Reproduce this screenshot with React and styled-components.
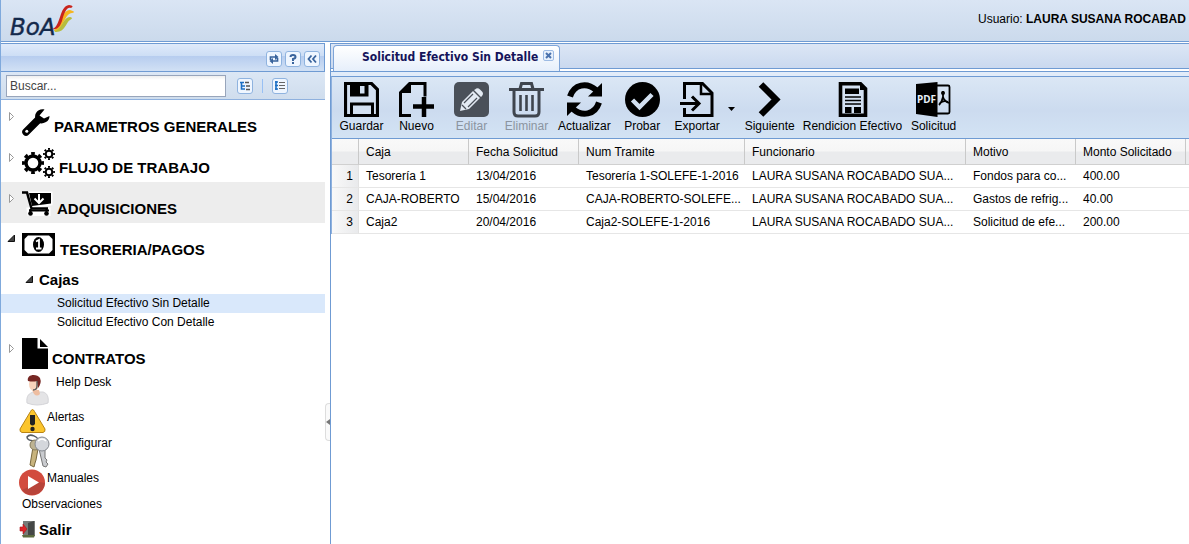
import React from "react";
import styled, { createGlobalStyle, css } from "styled-components";

const GlobalStyle = createGlobalStyle`
  * { box-sizing: border-box; }
  html, body, #root { height: 100%; }
  body {
    margin: 0;
    background: #fff;
    color: #000;
    font: 12px/18px "Liberation Sans", Arial, sans-serif;
    overflow: hidden;
  }
  button, input { font: inherit; color: inherit; }
  svg { display: block; flex: none; }
`;

const Page = styled.div`
  display: flex;
  flex-direction: column;
  min-height: 100vh;
  border-left: 1px solid #7fa9dc;
`;

const Banner = styled.header`
  display: flex;
  justify-content: space-between;
  height: 42px;
  overflow: hidden;
  background: linear-gradient(#dae5f4, #cbdaec);
  border-bottom: 1px solid #6f9bd3;
`;

const User = styled.div`
  flex: 0 0 211px;
  padding-top: 10px;
  white-space: nowrap;
`;

const Body = styled.div`
  display: flex;
  flex: 1;
  margin-top: 1px;
`;

const Sidebar = styled.aside`
  flex: 0 0 324px;
  display: flex;
  flex-direction: column;
`;

const PanelHead = styled.div`
  display: flex;
  align-items: center;
  justify-content: flex-end;
  gap: 3px;
  height: 29px;
  padding: 2px 4px 0 0;
  border: solid #6f9bd3;
  border-width: 1px 1px 1px 0;
  background: linear-gradient(#dfeafa, #cddef5 44%, #b7cdef 46%, #cfdff4 95%);
`;

const ToolButton = styled.button`
  width: 16px;
  height: 16px;
  padding: 0;
  border: 1px solid #8fb3df;
  border-radius: 3px;
  background: #eff6ff;
  color: #39639c;
  display: grid;
  place-items: center;
`;

const SearchBar = styled.div`
  display: flex;
  align-items: center;
  height: 28px;
  padding-left: 5px;
  gap: 9px;
  background: linear-gradient(#dce7f5, #cfdded);
  border-bottom: 1px solid #8fb1de;
`;

const Search = styled.input`
  width: 220px;
  height: 22px;
  margin-right: 2px;
  padding: 0 3px;
  border: 1px solid #98a5bb;
  background: linear-gradient(#eee, #fff 4px);
  color: #444;
  &::placeholder { color: #444; opacity: 1; }
`;

const Separator = styled.span`
  width: 1px;
  height: 14px;
  background: #98c0f4;
`;

const Tree = styled.ul`
  list-style: none;
  margin: 0;
  padding: 0;
`;

const kinds = {
  module: css`height: 41px; padding-left: 5px;`,
  folder: css`height: 30px; padding-left: 23px;`,
  leaf: css`height: 19px; padding-left: 56px;`,
  tool: css`height: 35px; padding-left: 20px;`,
  compact: css`height: 26px; padding-left: 18px;`,
  plain: css`height: 19px; padding-left: 21px;`,
  exit: css`height: 30px; padding-left: 18px;`,
};

const Row = styled.li`
  display: flex;
  align-items: flex-start;
  ${(p) => kinds[p.$kind]}
  background: ${(p) => p.$bg || "transparent"};
`;

const Toggle = styled.button`
  flex: none;
  width: ${(p) => (p.$small ? 15 : 16)}px;
  height: 12px;
  margin-top: 10px;
  padding: 0;
  border: 0;
  background: none;
`;

const ModuleIcon = styled.span`
  align-self: center;
  width: ${(p) => p.$w}px;
  padding-top: 2px;
  margin-right: 4px;
`;

const Heading = styled.a`
  color: inherit;
  text-decoration: none;
  font-size: 15px;
  font-weight: bold;
  line-height: 18px;
  margin-top: ${(p) => (p.$deep ? 18 : 7)}px;
  white-space: nowrap;
`;

const Item = styled.a`
  color: inherit;
  text-decoration: none;
  white-space: nowrap;
`;

const ItemIcon = styled.span`
  width: ${(p) => p.$w}px;
  margin-top: ${(p) => p.$top || 0}px;
  margin-right: ${(p) => p.$gap || 0}px;
`;

const Splitter = styled.div`
  flex: 0 0 5px;
  padding-top: 360px;
`;

const Collapse = styled.button`
  width: 5px;
  height: 38px;
  padding: 0;
  border: 1px solid #ddd;
  border-right: 0;
  border-radius: 4px 0 0 4px;
  background: #fafafa;
  display: grid;
  place-items: center;
`;

const Main = styled.main`
  flex: 1;
  min-width: 0;
  border-left: 1px solid #6f9bd3;
  border-top: 1px solid #6f9bd3;
`;

const TabStrip = styled.div`
  height: 28px;
  padding: 1px 0 0 2px;
  background: linear-gradient(#dce6f5, #cad9ef 24px, #6f9bd3 24px, #6f9bd3 25px, #fff 25px, #fff 27px, #6f9bd3 27px);
`;

const Tab = styled.div`
  display: flex;
  align-items: flex-start;
  gap: 5px;
  width: 227px;
  height: 26px;
  padding: 2px 0 0 28px;
  border: 1px solid #7fa5d8;
  border-bottom: 0;
  border-radius: 4px 4px 0 0;
  background: linear-gradient(#fff, #e6effb);
  color: #15145a;
  font: bold 12px/18px "DejaVu Sans Condensed", Tahoma, sans-serif;
  white-space: nowrap;
`;

const CloseTab = styled.button`
  flex: none;
  width: 11px;
  height: 11px;
  margin-top: 2px;
  padding: 0;
  border: 1px solid #9dbbe4;
  border-radius: 2px;
  background: #e8f1fc;
  color: #4a72ad;
`;

const TabBody = styled.div`
  padding-top: 4px;
  background: linear-gradient(#e2ecf9, #e2ecf9) top / 100% 4px no-repeat;
`;

const Content = styled.section`
  border-left: 1px solid #8fb1de;
  border-top: 1px solid #6f9bd3;
`;

const Toolbar = styled.div`
  display: flex;
  align-items: flex-start;
  gap: 8px;
  height: 62px;
  padding: 5px 6px 0;
  background: linear-gradient(#dbe7f5, #ccdbef 55%, #d3e3f4);
  border-bottom: 1px solid #6f9bd3;
`;

const Action = styled.button`
  display: flex;
  flex: none;
  flex-direction: column;
  align-items: center;
  min-width: 47px;
  padding: 0;
  border: 0;
  background: none;
  line-height: 17px;
  white-space: nowrap;
  &:disabled { color: #8b94a0; }
`;

const MenuAction = styled.div`
  display: flex;
  align-items: center;
  gap: 7px;
  margin-right: 2px;
`;

const MenuArrow = styled.button`
  width: 7px;
  height: 4px;
  padding: 0;
  border: 0;
  background: none;
`;

const Grid = styled.table`
  width: 100%;
  table-layout: fixed;
  border-collapse: separate;
  border-spacing: 0;
`;

const Col = styled.col`
  width: ${(p) => (p.$w ? `${p.$w}px` : "auto")};
`;

const Th = styled.th`
  height: 26px;
  padding: 0 7px;
  text-align: left;
  font-weight: normal;
  white-space: nowrap;
  background: linear-gradient(#f9f9f9, #f6f6f6 48%, #eaebed 52%, #eaebed);
  border-right: 1px solid #c9c9c9;
  border-bottom: 1px solid #d0d0d0;
  &:last-child { border-right: 0; }
`;

const Td = styled.td`
  height: 23px;
  padding: 0 0 0 7px;
  white-space: nowrap;
  border-bottom: 1px solid #e6e6e6;
`;

const RowNumber = styled(Td)`
  padding: 0 5px 0 0;
  text-align: right;
  background: linear-gradient(90deg, #f9f9f9, #e9eaec);
  border-right: 1px solid #e2e2e2;
`;

/* ---------- drawings ---------- */

const Logo = () => (
  <svg width="90" height="41" viewBox="0 0 90 41" role="img" aria-label="BoA">
    <text x="9" y="35" fontFamily="DejaVu Sans, Verdana, sans-serif" fontStyle="italic" fontSize="23" fill="#13294b" stroke="#13294b" strokeWidth=".4">BoA</text>
    <path d="M53 30C61 30 61 18 69 17Q73 18 69 20C65 22 64 33 54 32Z" fill="#b5bd3e" />
    <path d="M53 30C61 27 59 11 69 10Q76 12 71 13C64 13 62 29 54 31Z" fill="#f6b51f" />
    <path d="M51 29C60 27 58 6 68 5Q74 6 70 8C66 6 63 13 61 21C59 27 56 30 51 29Z" fill="#c9241c" />
  </svg>
);

const Closed = () => (
  <svg width="16" height="12"><path d="M3.500 2.500v8l4-4z" fill="#fff" stroke="#999" /></svg>
);
const Opened = () => (
  <svg width="16" height="12"><path d="M8.500 2v6.500H2z" fill="#444" stroke="#111" /></svg>
);

const Wrench = () => (
  <svg width="28" height="28" viewBox="0 0 28 28">
    <path d="M4 24L16 12" stroke="#000" strokeWidth="7.500" strokeLinecap="round" />
    <path d="M22.500 1.500C16 0 11 6 14 12.500q4 5 10 1.500 3.500-2 3.500-6L22 10.500l-4.500-3z" />
    <circle cx="4.800" cy="23.300" r="1.500" fill="#fff" />
  </svg>
);

const Gear = ({ x, y, ring, teeth, w }) => (
  <g fill="none" stroke="#000">
    <circle cx={x} cy={y} r={ring} strokeWidth={w} />
    <circle cx={x} cy={y} r={teeth} strokeWidth={w} pathLength="16" strokeDasharray="1 1" strokeDashoffset=".5" />
  </g>
);

const Gears = () => (
  <svg width="33" height="30" viewBox="0 0 33 30">
    <Gear x={11} y={15} ring={7} teeth={9.3} w={3.4} />
    <Gear x={27} y={6} ring={3.3} teeth={5} w={2} />
    <Gear x={27} y={24} ring={3.3} teeth={5} w={2} />
  </svg>
);

const Cart = () => (
  <svg width="31" height="25" viewBox="0 0 31 25">
    <g stroke="#fff" strokeWidth="3" fill="#fff"><path d="M7 2h22v11L9 16z" /><path d="M6 18h21v6H7z" /></g>
    <path d="M0 1.500h5l4.500 16H26" fill="none" stroke="#000" strokeWidth="2.500" />
    <path d="M7 2h22v10.500L10 15z" />
    <path d="M7 19.500h20M8.500 18v6M24.500 18v6" stroke="#000" strokeWidth="2" />
    <circle cx="8.500" cy="22.500" r="2.300" /><circle cx="24.500" cy="22.500" r="2.300" />
    <path d="M17 3v9M12.500 7.500l4.500 4.500 4.500-4.500" fill="none" stroke="#fff" strokeWidth="2" />
  </svg>
);

const Money = () => (
  <svg width="33" height="23" viewBox="0 0 33 23">
    <rect width="33" height="23" />
    <path d="M6 2.500h21l3.500 3.500v11L27 20.500H6L2.500 17V6z" fill="#fff" />
    <ellipse cx="16.500" cy="11.500" rx="5.500" ry="7.500" />
    <path d="M14 8.500l3-1.500v8M14 15.500h5.500" fill="none" stroke="#fff" strokeWidth="1.800" />
  </svg>
);

const Sheet = () => (
  <svg width="26" height="31" viewBox="0 0 26 31">
    <path d="M0 0h15.500v10.500H26V31H0zM18 1l8 8h-8z" />
  </svg>
);

const Agent = () => (
  <svg width="32" height="35" viewBox="0 0 32 35">
    <path d="M6 30C5 23 8 20 13 19l9 0c4 1 6 5 5 11q-11 4-21 0" fill="#e4e4e6" stroke="#d4d4d8" />
    <path d="M11 17h7l1 4q-3 3-6 0z" fill="#eebda0" />
    <ellipse cx="13" cy="11" rx="5" ry="7" fill="#f8d3bb" />
    <path d="M7 8C5 1 16 0 19 5q2 5-2 10l-1-7q-4 1-9 0" fill="#762723" />
    <path d="M16 8v5q0 4-4 4" fill="none" stroke="#555" strokeWidth="1.300" />
  </svg>
);

const Warning = () => (
  <svg width="27" height="26" viewBox="0 0 27 26">
    <path d="M13.500 1.500q1 0 2 2L26 21q.5 3-2 3.500H3Q.5 24 1 21L11.500 3.500q1-2 2-2" fill="#fbc52d" stroke="#b98414" />
    <path d="M11 7h5v9q-2.500 3-5 0z" fill="#222" /><circle cx="13.500" cy="21" r="2.200" fill="#222" />
  </svg>
);

const Keys = () => (
  <svg width="32" height="35" viewBox="0 0 32 35">
    <path d="M19 9C17 2 9-1 6 3q0 4 9 4" fill="none" stroke="#555b63" strokeWidth="1.500" />
    <path d="M12 13L9 31l4 2 1-4 1-3 2-11z" fill="#c8b47e" stroke="#78683f" />
    <path d="M18 15l4 17 3 1 2-3-2-2 1-2-2-2 0-9z" fill="#c9cbcf" stroke="#777" />
    <circle cx="14" cy="11" r="5" fill="#bdb392" stroke="#857b5c" />
    <circle cx="21" cy="10" r="7" fill="#d4d7dc" stroke="#84888f" />
    <path d="M17 7q4-4 8 0" fill="none" stroke="#fff" strokeWidth="1.500" />
  </svg>
);

const Play = () => (
  <svg width="27" height="27" viewBox="0 0 27 27">
    <circle cx="13" cy="13.500" r="13" fill="#d24b3e" />
    <path d="M3 21A13 13 0 0 0 26 14L20 13z" fill="#b8443a" />
    <path d="M9 7l11 6.500L9 20z" fill="#fff" />
  </svg>
);

const Door = () => (
  <svg width="18" height="18" viewBox="0 0 18 18">
    <path d="M4 1h12v15H4z" fill="#777a77" /><path d="M9 3l6-2v15l-6 1z" fill="#454746" />
    <path d="M3 15h13l-1 2.500H4z" fill="#5c6b3f" />
    <path d="M1 7h3V4l4 5-4 5v-3H1z" fill="#de2428" stroke="#a8151b" strokeWidth=".6" />
  </svg>
);

const ExpandAll = () => (
  <svg width="14" height="14"><path d="M2 3.500h4M3.500 3v7H7M3.500 7H7" fill="none" stroke="#1c6fc4" strokeWidth="1.600" /><path d="M7 3.500h4M8 7h4M8 10.500h4" stroke="#555" strokeWidth="1.500" /></svg>
);
const CollapseAll = () => (
  <svg width="14" height="14"><path d="M2 3h3M2 6.500h3M2 10h3M3 2v9" stroke="#1c6fc4" strokeWidth="1.600" /><path d="M6 3.500h6M6 6.500h6M6 9.500h6" stroke="#666" /></svg>
);

const Big = ({ children }) => (
  <svg width="35" height="36" viewBox="0 0 35 36">{children}</svg>
);

const pale = "#d3e0f1";

const icons = {
  save: (
    <Big>
      <path d="M1.500 1.500h26l6 6v26h-32z" fill={pale} stroke="#000" strokeWidth="3.200" />
      <path d="M6 1h18.500v13.500H6z" /><path d="M16 4h4.500v7.500H16z" fill={pale} />
      <path d="M7.500 34V22h21v12" fill="none" stroke="#000" strokeWidth="3" />
    </Big>
  ),
  add: (
    <Big>
      <path d="M11 1.500h15v13M1.500 10v23.500H12" fill="none" stroke="#000" strokeWidth="3" />
      <path d="M10 0h2v11H0v-1z" /><path d="M14 24.500h21M25 15v20" stroke="#000" strokeWidth="4.500" />
    </Big>
  ),
  edit: (
    <Big>
      <rect width="35" height="35" rx="5" fill="#4a5059" />
      <path d="M6 29l2-9L19 9l7 7-11 11z" fill="#e3eaf3" /><path d="M21 7.500q2.500-2.500 5 0l2 2q2 2 0 4.500l-1 1-7-7z" fill="#e3eaf3" />
      <path d="M10 21l9-9M14 25l9-9M8 23l4 4" stroke="#4a5059" strokeWidth="1.200" />
    </Big>
  ),
  trash: (
    <Big>
      <path d="M0 7.500h35M11 7l1.500-5.500h10L24 7M5 8v22q0 4 4 4h17q4 0 4-4V8" fill="none" stroke="#3f454e" strokeWidth="3" />
      <path d="M11.500 13v16M17.500 13v16M23.500 13v16" stroke="#3f454e" strokeWidth="2.600" />
    </Big>
  ),
  refresh: (
    <Big>
      <path d="M3 14.500C7 2 20 0 29 8" fill="none" stroke="#000" strokeWidth="6" />
      <path d="M35 1v13.500H21z" />
      <path d="M32 20.500C28 33 15 35 6 27" fill="none" stroke="#000" strokeWidth="6" />
      <path d="M0 34V20.500h14z" />
    </Big>
  ),
  check: (
    <Big>
      <circle cx="17.500" cy="17.500" r="17.500" />
      <path d="M7.500 18l7 7L27 12.500" fill="none" stroke={pale} strokeWidth="4.500" />
    </Big>
  ),
  exporting: (
    <Big>
      <path d="M4.500 17V1.500h18L32 11v22.500H4.500V26" fill="none" stroke="#000" strokeWidth="3" />
      <path d="M21 2v10h11" fill="none" stroke="#000" strokeWidth="2.500" />
      <path d="M0 21.500h18M12 14.500l7 7-7 7" fill="none" stroke="#000" strokeWidth="3" />
    </Big>
  ),
  next: (
    <Big><path d="M9 2.500l15 15-15 15" fill="none" stroke="#000" strokeWidth="6.500" /></Big>
  ),
  report: (
    <Big>
      <path d="M5.500 1.800h20l5 5v26.500h-25z" fill={pale} stroke="#000" strokeWidth="3.600" />
      <path d="M25 1v7h6z" /><path d="M10 6.500h14v5.500H10zM10 25h6.500v6H10zM19 25h7v6h-7z" />
      <path d="M10 15h16M10 18.500h16M10 22h16" stroke="#000" strokeWidth="1.700" />
    </Big>
  ),
  pdf: (
    <Big>
      <path d="M21 3.500h11q1.500 0 1.500 1.500v25q0 1.500-1.500 1.500H21" fill="none" stroke="#000" strokeWidth="1.800" />
      <path d="M27 9v6q-1 5-4 8M27 15q1 4 6 6M24 21q4-3 8-1" fill="none" stroke="#000" strokeWidth="1.800" />
      <circle cx="27" cy="11" r="2" />
      <path d="M0 2l21.500-2v35L0 32z" />
      <text x="1" y="21" fontFamily="Noto Sans, sans-serif" fontWeight="bold" fontSize="10" fill="#e8eff8">PDF</text>
    </Big>
  ),
};

/* ---------- data ---------- */

const modules = [
  { label: "PARAMETROS GENERALES", w: 28, icon: <Wrench /> },
  { label: "FLUJO DE TRABAJO", w: 33, icon: <Gears /> },
  { label: "ADQUISICIONES", w: 31, icon: <Cart />, bg: "#ededed" },
  { label: "TESORERIA/PAGOS", w: 34, icon: <Money />, open: true },
];

const columns = [
  ["", 27], ["Caja", 110], ["Fecha Solicitud", 110], ["Num Tramite", 166],
  ["Funcionario", 221], ["Motivo", 110], ["Monto Solicitado", 110], ["", 0],
];

const rows = [
  ["Tesorería 1", "13/04/2016", "Tesorería 1-SOLEFE-1-2016", "LAURA SUSANA ROCABADO SUA...", "Fondos para co...", "400.00"],
  ["CAJA-ROBERTO", "15/04/2016", "CAJA-ROBERTO-SOLEFE...", "LAURA SUSANA ROCABADO SUA...", "Gastos de refrig...", "40.00"],
  ["Caja2", "20/04/2016", "Caja2-SOLEFE-1-2016", "LAURA SUSANA ROCABADO SUA...", "Solicitud de efe...", "200.00"],
];

const Module = ({ label, w, icon, bg, open }) => (
  <Row $kind="module" $bg={bg}>
    <Toggle aria-label={`Desplegar ${label}`}>{open ? <Opened /> : <Closed />}</Toggle>
    <ModuleIcon $w={w}>{icon}</ModuleIcon>
    <Heading href="#" $deep>{label}</Heading>
  </Row>
);

const Tool = ({ icon, label, disabled }) => (
  <Action disabled={disabled}>{icons[icon]}{label}</Action>
);

export default function App() {
  return (
    <Page>
      <GlobalStyle />
      <Banner>
        <Logo />
        <User>Usuario: <b>LAURA SUSANA ROCABAD</b></User>
      </Banner>
      <Body>
        <Sidebar>
          <PanelHead>
            <ToolButton aria-label="Recargar">
              <svg width="12" height="12"><path d="M2.500 7V4H8M9.500 5v3H4" fill="none" stroke="currentColor" strokeWidth="1.700" /><path d="M7 1l3.500 3L7 7zM5 5L1.500 8 5 11z" fill="currentColor" /></svg>
            </ToolButton>
            <ToolButton aria-label="Ayuda">
              <svg width="12" height="12"><path d="M3.500 4Q3.500 2 6 2t2.500 2Q8.500 5.500 6 6v2M6 9v2" fill="none" stroke="currentColor" strokeWidth="2" /></svg>
            </ToolButton>
            <ToolButton aria-label="Contraer">
              <svg width="12" height="12"><path d="M5.500 2.500L2.500 6l3 3.500M10 2.500L7 6l3 3.500" fill="none" stroke="currentColor" strokeWidth="1.800" /></svg>
            </ToolButton>
          </PanelHead>
          <SearchBar>
            <Search aria-label="Buscar" placeholder="Buscar..." />
            <ToolButton aria-label="Expandir todo"><ExpandAll /></ToolButton>
            <Separator />
            <ToolButton aria-label="Contraer todo"><CollapseAll /></ToolButton>
          </SearchBar>
          <Tree>
            {modules.map((m) => <Module key={m.label} {...m} />)}
            <Row $kind="folder">
              <Toggle $small aria-label="Contraer Cajas"><Opened /></Toggle>
              <Heading href="#">Cajas</Heading>
            </Row>
            <Row $kind="leaf" $bg="#d9e8fb"><Item href="#">Solicitud Efectivo Sin Detalle</Item></Row>
            <Row $kind="leaf"><Item href="#">Solicitud Efectivo Con Detalle</Item></Row>
            <Module label="CONTRATOS" w={26} icon={<Sheet />} />
            <Row $kind="tool"><ItemIcon $w={32} $gap={3}><Agent /></ItemIcon><Item href="#">Help Desk</Item></Row>
            <Row $kind="compact"><ItemIcon $w={27} $gap={1}><Warning /></ItemIcon><Item href="#">Alertas</Item></Row>
            <Row $kind="tool"><ItemIcon $w={32} $gap={3}><Keys /></ItemIcon><Item href="#">Configurar</Item></Row>
            <Row $kind="compact"><ItemIcon $w={27} $gap={1}><Play /></ItemIcon><Item href="#">Manuales</Item></Row>
            <Row $kind="plain"><Item href="#">Observaciones</Item></Row>
            <Row $kind="exit"><ItemIcon $w={18} $top={6} $gap={2}><Door /></ItemIcon><Heading href="#">Salir</Heading></Row>
          </Tree>
        </Sidebar>
        <Splitter>
          <Collapse aria-label="Contraer panel">
            <svg width="4" height="6"><path d="M4 0v6L0 3z" fill="#777" /></svg>
          </Collapse>
        </Splitter>
        <Main>
          <TabStrip>
            <Tab>Solicitud Efectivo Sin Detalle
              <CloseTab aria-label="Cerrar">
                <svg width="9" height="9"><path d="M2 2l5 5M7 2L2 7" stroke="currentColor" strokeWidth="2" /></svg>
              </CloseTab>
            </Tab>
          </TabStrip>
          <TabBody>
            <Content>
              <Toolbar>
                <Tool icon="save" label="Guardar" />
                <Tool icon="add" label="Nuevo" />
                <Tool icon="edit" label="Editar" disabled />
                <Tool icon="trash" label="Eliminar" disabled />
                <Tool icon="refresh" label="Actualizar" />
                <Tool icon="check" label="Probar" />
                <MenuAction>
                  <Tool icon="exporting" label="Exportar" />
                  <MenuArrow aria-label="Opciones de exportar">
                    <svg width="7" height="4"><path d="M0 0h7L3.500 4z" /></svg>
                  </MenuArrow>
                </MenuAction>
                <Tool icon="next" label="Siguiente" />
                <Tool icon="report" label="Rendicion Efectivo" />
                <Tool icon="pdf" label="Solicitud" />
              </Toolbar>
              <Grid>
                <colgroup>{columns.map(([, w], i) => <Col key={i} $w={w} />)}</colgroup>
                <thead>
                  <tr>{columns.map(([name], i) => <Th key={i}>{name}</Th>)}</tr>
                </thead>
                <tbody>
                  {rows.map((row, i) => (
                    <tr key={i}>
                      <RowNumber>{i + 1}</RowNumber>
                      {row.map((cell, j) => <Td key={j}>{cell}</Td>)}
                      <Td />
                    </tr>
                  ))}
                </tbody>
              </Grid>
            </Content>
          </TabBody>
        </Main>
      </Body>
    </Page>
  );
}
